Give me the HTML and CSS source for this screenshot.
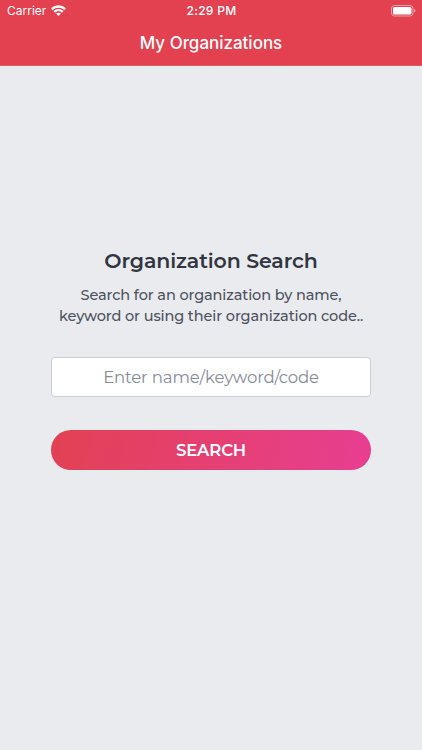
FILE: index.html
```html
<!DOCTYPE html>
<html lang="en">
<head>
<meta charset="utf-8">
<title>My Organizations</title>
<link rel="stylesheet" href="styles.css">
</head>
<body>
<header class="header">
  <div class="status">
    <div class="carrier"><span class="carrier-name">Carrier</span>
      <svg class="wifi" width="15" height="11" viewBox="0 0 15 11" fill="none" stroke="#fff" stroke-width="2.3"><path d="M.8 4.1C4.6.6 10.4.6 14.2 4.1M3.2 6.8c2.5-2.2 6.1-2.2 8.6 0"/><path d="M7.5 10.9 5.1 8.6c1.3-1.2 3.5-1.2 4.8 0z" fill="#fff" stroke="none"/></svg>
    </div>
    <span class="time">2:29 PM</span>
    <svg class="battery" width="25" height="12" viewBox="0 0 25 12"><rect x=".5" y=".5" width="21.5" height="10.5" rx="3" fill="none" stroke="#fff" stroke-opacity=".5"/><rect x="2" y="2" width="18.5" height="7.5" rx="1.6" fill="#fff"/><path d="M23.2 4c1.8.6 1.8 3 0 3.6z" fill="#fff" fill-opacity=".55"/></svg>
  </div>
  <h1 class="title">My Organizations</h1>
</header>
<main class="content">
  <h2 class="heading">Organization Search</h2>
  <p class="hint">Search for an organization by name,<br>keyword or using their organization code..</p>
  <input class="field" type="text" placeholder="Enter name/keyword/code" aria-label="Organization">
  <button class="search" type="button">SEARCH</button>
</main>
</body>
</html>
```
FILE: styles.css
```css
* { box-sizing: border-box; }
body { margin: 0; min-height: 750px; background: #eaebef; color: #31353f; font-family: Montserrat, Lato, sans-serif; }
.header { height: 66px; background: #e34050; border-bottom: 1px solid #e35b6b; color: #fff; font-family: Inter, sans-serif; }
.status { height: 22px; padding: 0 6px 0 7px; display: grid; grid-template-columns: 1fr auto 1fr; align-items: center; font-size: 12px; line-height: 20px; }
.carrier { display: flex; align-items: center; gap: 5px; margin-top: -1px; }
.carrier-name { font-size: 12px; }
.time { font-weight: 500; letter-spacing: .3px; margin-top: -1px; }
.battery { justify-self: end; margin-top: -1px; }
.title { margin: 0; text-align: center; font-size: 17px; line-height: 42px; font-weight: 500; letter-spacing: -.02px; }
.content { padding: 179px 51px 0; display: flex; flex-direction: column; }
.heading { margin: 0; text-align: center; font-size: 20.5px; line-height: 31px; font-weight: 600; letter-spacing: -.1px; white-space: nowrap; }
.hint { margin: 9px -20px 0; text-align: center; font-size: 14.5px; line-height: 21px; font-weight: 500; letter-spacing: -.12px; color: #4d525e; white-space: nowrap; }
.field { margin-top: 30px; width: 320px; height: 40px; border: 1px solid #cbced9; border-radius: 4px; background: #fff; text-align: center; font: 16.5px Montserrat, Lato, sans-serif; letter-spacing: -.14px; padding: 0; }
.field::placeholder { color: #858b97; opacity: 1; }
.search { margin-top: 32.6px; width: 320px; height: 40.7px; border: 0; border-radius: 21px; background: linear-gradient(105deg, #e24153, #e83e92); color: #fff; font: 600 16.5px Montserrat, Lato, sans-serif; letter-spacing: -.15px; }
```
